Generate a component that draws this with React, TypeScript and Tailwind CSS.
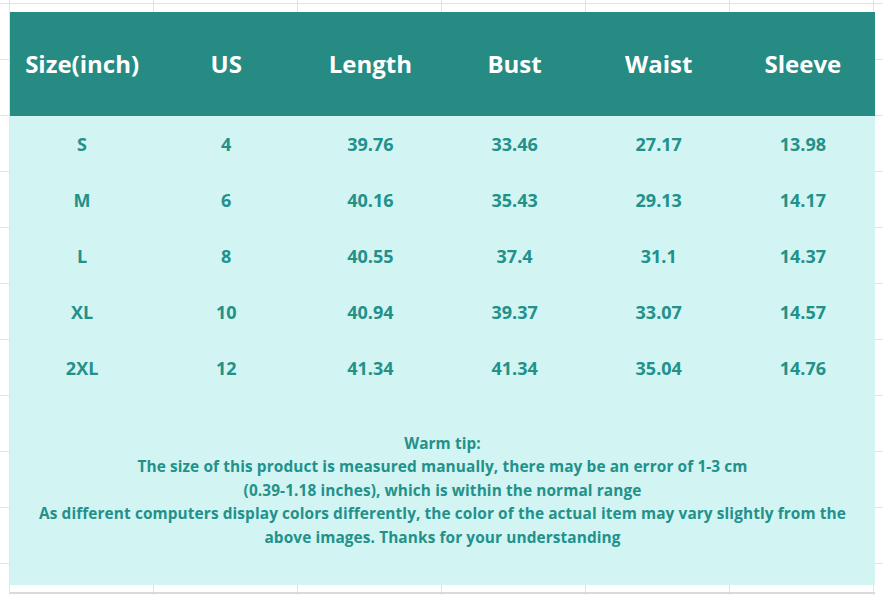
import React from "react";

const headers = ["Size(inch)", "US", "Length", "Bust", "Waist", "Sleeve"];

const rows = [
  ["S", "4", "39.76", "33.46", "27.17", "13.98"],
  ["M", "6", "40.16", "35.43", "29.13", "14.17"],
  ["L", "8", "40.55", "37.4", "31.1", "14.37"],
  ["XL", "10", "40.94", "39.37", "33.07", "14.57"],
  ["2XL", "12", "41.34", "41.34", "35.04", "14.76"],
];

const App = () => {
  return (
    <div
      className="w-[883px] h-[595px] overflow-hidden bg-white pl-[10px] pt-[12px] bg-[linear-gradient(to_right,#e3e3e3_1px,transparent_1px),linear-gradient(to_bottom,#e3e3e3_1px,transparent_1px)] bg-[size:144px_100%,100%_56px] bg-[position:9px_0,0_3px]"
      style={{ fontFamily: '"Open Sans", "Noto Sans", sans-serif' }}
    >
      <div className="w-[865px] flex flex-col">
        <div className="grid grid-cols-6 h-[104px] bg-[#258b83] items-center">
          {headers.map((h) => (
            <div key={h} className="text-center text-white text-[24px] font-bold">
              {h}
            </div>
          ))}
        </div>
        <div className="bg-[#d2f4f2] flex flex-col">
          {rows.map((r) => (
            <div key={r[0]} className="grid grid-cols-6 h-[56px] items-center">
              {r.map((c, i) => (
                <div key={i} className="text-center text-[#22918a] text-[18px] font-bold">
                  {c}
                </div>
              ))}
            </div>
          ))}
          <div className="h-[189px] flex flex-col items-center justify-center text-center text-[#22918a] text-[15.4px] font-bold leading-[23.5px] tracking-[0.1px]">
            <p>Warm tip:</p>
            <p>The size of this product is measured manually, there may be an error of 1-3 cm</p>
            <p>(0.39-1.18 inches), which is within the normal range</p>
            <p>As different computers display colors differently, the color of the actual item may vary slightly from the</p>
            <p>above images. Thanks for your understanding</p>
          </div>
        </div>
        <div className="h-[9px] border-b-2 border-[#dadada]" />
      </div>
    </div>
  );
};

export default App;
